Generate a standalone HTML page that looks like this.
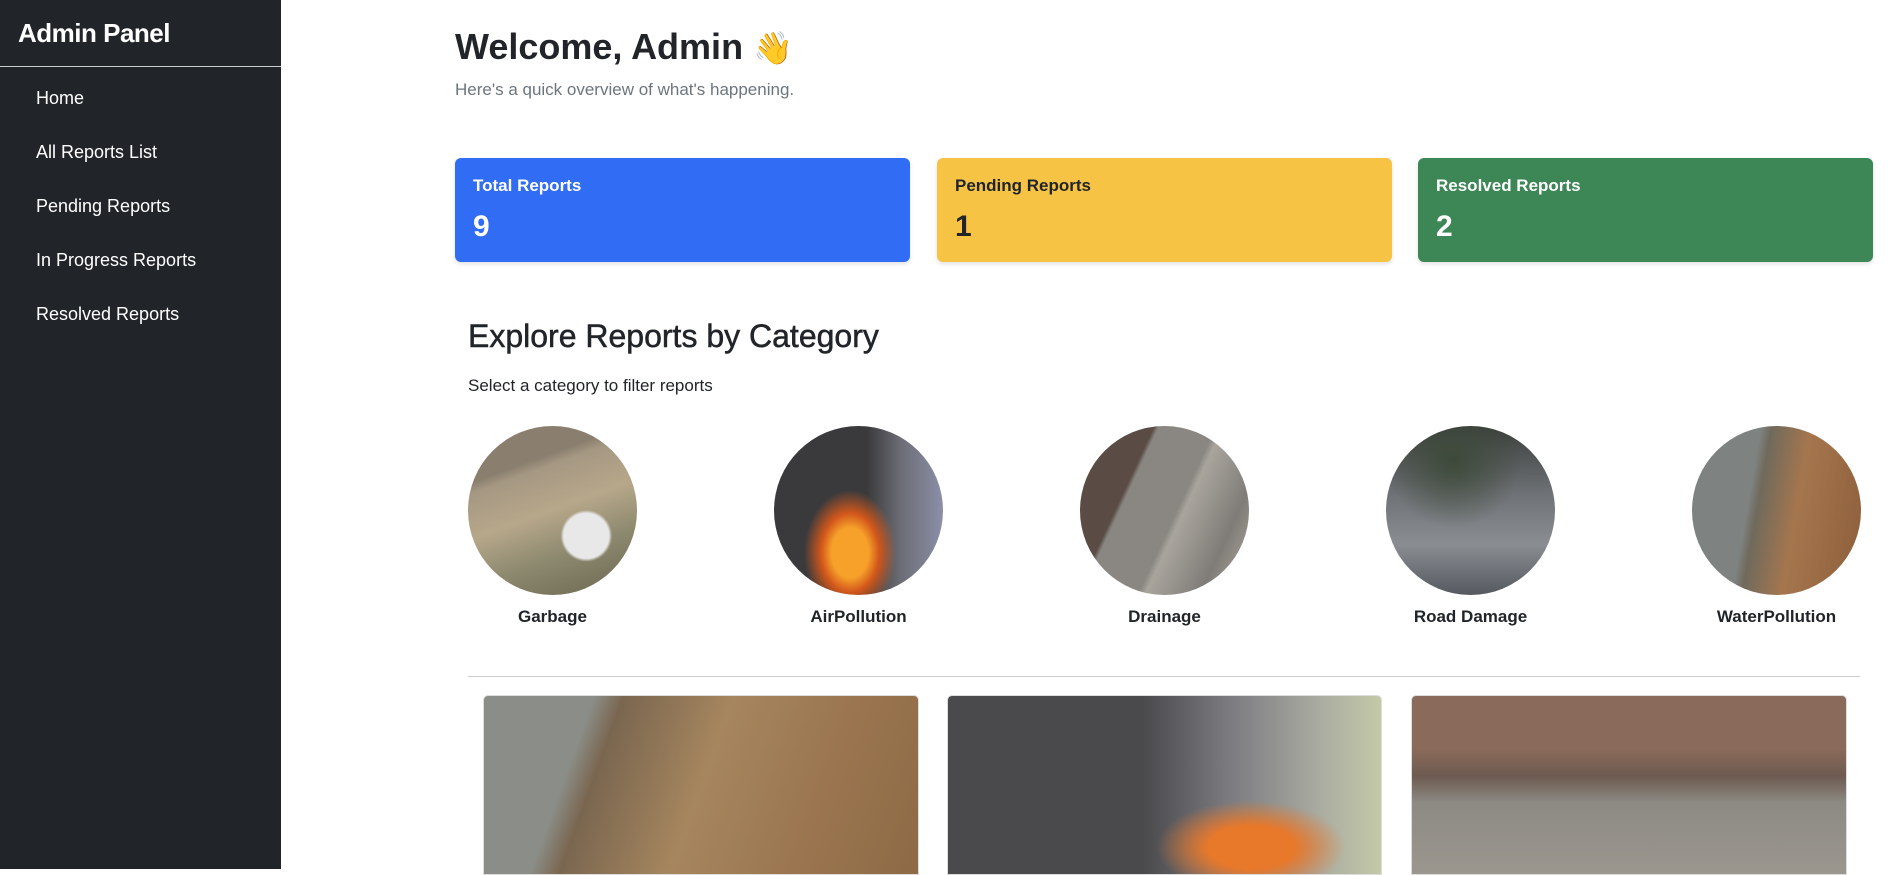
<!DOCTYPE html>
<html><head><meta charset="utf-8"><style>
*{margin:0;padding:0;box-sizing:border-box}
body{width:1893px;height:869px;overflow:hidden;background:#fff;font-family:"Liberation Sans",sans-serif;color:#212529;position:relative}
.sb{position:absolute;left:0;top:0;width:281px;height:869px;background:#212529;color:#fff}
.sb h1{position:absolute;left:18px;top:18px;font-size:26px;font-weight:bold;letter-spacing:-0.5px}
.sb .dv{position:absolute;left:0;top:66px;width:281px;height:1px;background:#ccc}
.sb a{position:absolute;left:36px;font-size:18px;color:#fff;text-decoration:none}
.abs{position:absolute}
.card{position:absolute;top:158px;width:455px;height:104px;border-radius:6px;color:#fff;box-shadow:0 2px 4px rgba(0,0,0,.12)}
.card .l{position:absolute;left:18px;top:18px;font-size:17px;font-weight:bold}
.card .n{position:absolute;left:18px;top:52px;font-size:30px;font-weight:bold}
.c{position:absolute;top:426px;width:169px;height:169px;border-radius:50%}
.cl{position:absolute;top:607px;width:169px;text-align:center;font-size:17px;font-weight:bold}
.ic{position:absolute;top:695px;height:180px;border:1px solid #ddd;border-radius:5px 5px 0 0}
</style></head><body>
<div class="sb"><h1>Admin Panel</h1><div class="dv"></div>
<a style="top:88px">Home</a><a style="top:142px">All Reports List</a><a style="top:196px">Pending Reports</a><a style="top:250px">In Progress Reports</a><a style="top:304px">Resolved Reports</a></div>
<div class="abs" style="left:455px;top:26px;font-size:36px;font-weight:bold">Welcome, Admin <span style="font-size:32px">👋</span></div>
<div class="abs" style="left:455px;top:80px;font-size:17px;color:#6c757d">Here's a quick overview of what's happening.</div>
<div class="card" style="left:455px;background:#316cf4"><div class="l">Total Reports</div><div class="n">9</div></div>
<div class="card" style="left:937px;background:#f6c344;color:#212529"><div class="l">Pending Reports</div><div class="n">1</div></div>
<div class="card" style="left:1418px;background:#3d8757"><div class="l">Resolved Reports</div><div class="n">2</div></div>
<div class="abs" style="left:468px;top:318px;font-size:32px;font-weight:500;-webkit-text-stroke:0.5px #212529">Explore Reports by Category</div>
<div class="abs" style="left:468px;top:376px;font-size:17px">Select a category to filter reports</div>
<div class="c" style="left:468px;background:radial-gradient(circle at 70% 65%,#e8e8e8 0 14%,transparent 16%),linear-gradient(160deg,#8a7e6e 0 25%,#a59883 30%,#b7a78a 50%,#8e8a70 70%,#6a6650)"></div>
<div class="c" style="left:774px;background:radial-gradient(ellipse at 45% 75%,#f7a12a 0 14%,#d2571b 22%,transparent 35%),linear-gradient(90deg,#3a3a3c 0 55%,#6c6d75 75%,#8b8fa8)"></div>
<div class="c" style="left:1080px;background:linear-gradient(115deg,#5a4c45 0 30%,#8a8782 32% 55%,#a9a59d 58%,#7f7c78 80%,#b3aca0)"></div>
<div class="c" style="left:1386px;background:radial-gradient(circle at 40% 20%,#3d4a3a,transparent 40%),linear-gradient(180deg,#3c3f3d,#6e7175 40%,#8a8d92 70%,#555a60)"></div>
<div class="c" style="left:1692px;background:linear-gradient(100deg,#7e8280 0 35%,#6f6a5c 40%,#a5764e 60%,#8c5e3a)"></div>
<div class="cl" style="left:468px">Garbage</div><div class="cl" style="left:774px">AirPollution</div><div class="cl" style="left:1080px">Drainage</div><div class="cl" style="left:1386px">Road Damage</div><div class="cl" style="left:1692px">WaterPollution</div>
<div class="abs" style="left:468px;top:676px;width:1392px;height:1px;background:#ccc"></div>
<div class="ic" style="left:483px;width:436px;background:linear-gradient(110deg,#8b8e88 0 22%,#7a6650 28%,#a6865e 50%,#9a7550 75%,#8d6a45)"></div>
<div class="ic" style="left:947px;width:435px;background:radial-gradient(ellipse at 70% 85%,#e8782a 0 10%,transparent 22%),linear-gradient(90deg,#4a4a4d 0 45%,#7b7b80 65%,#a8aaa0 85%,#c4c9a8)"></div>
<div class="ic" style="left:1411px;width:436px;background:linear-gradient(180deg,#8a6a5a 0 30%,#6d5a50 45%,#8d8a84 60%,#9b978f 100%)"></div>
</body></html>
